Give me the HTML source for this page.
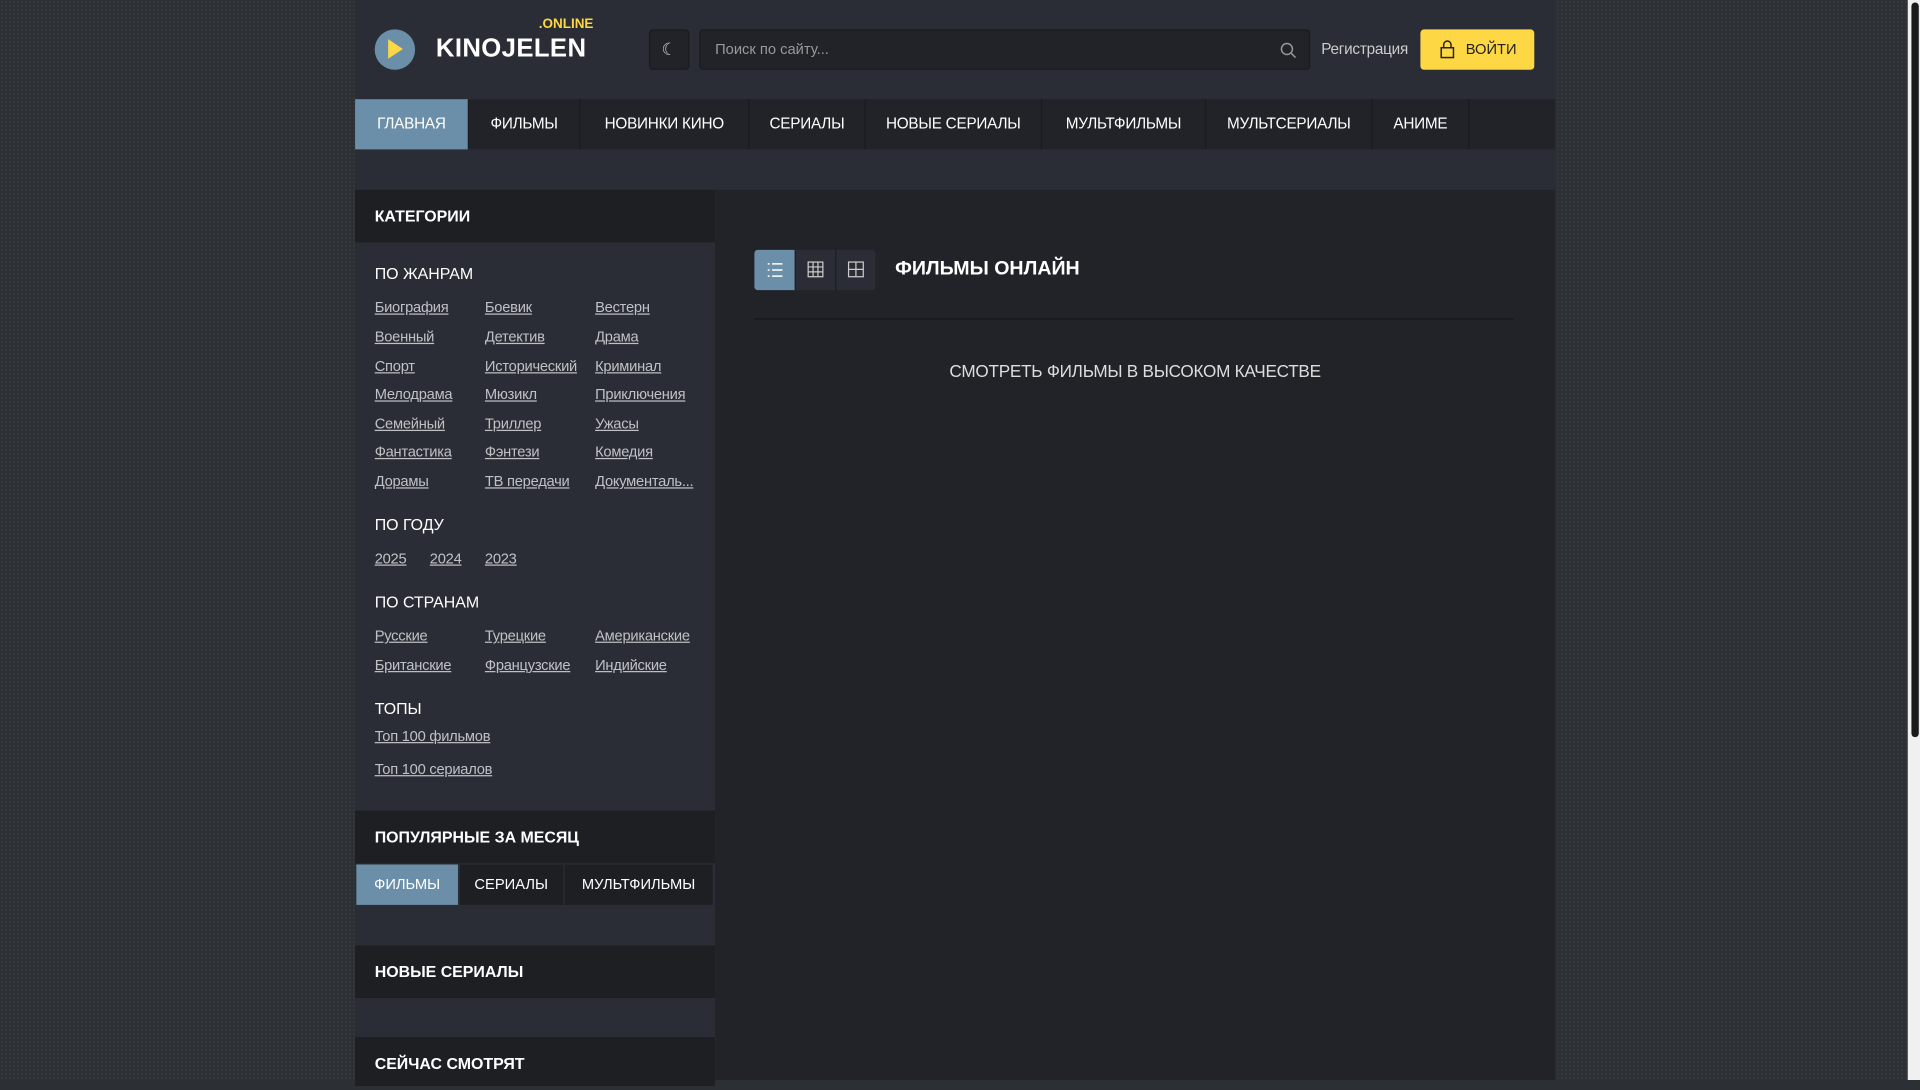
<!DOCTYPE html>
<html><head><meta charset="utf-8">
<style>
*{margin:0;padding:0;box-sizing:border-box}
html,body{width:1920px;height:1080px;overflow:hidden;background:#2c3035;font-family:"Liberation Sans",sans-serif}
body{background-color:#2c3035;background-image:radial-gradient(#353a3f 1px,transparent 1px);background-size:4px 4px}
#w{position:absolute;left:0;top:0;width:1568px;height:882px;transform:scale(1.22449);transform-origin:0 0}
.a{position:absolute}
.hdr{left:290px;top:0;width:980px;height:155px;background:#2a2d35}
.nav{left:290px;top:81px;width:980px;height:41px;background:#212328;display:flex}
.nav div{height:41px;line-height:41px;color:#fff;font-size:12.5px;border-right:1px solid #1a1b1f;text-align:center;white-space:nowrap;letter-spacing:-0.2px}
.nav .on{background:#6b8fa8}
.side{left:290px;top:155px;width:294px;height:727px;background:#2a2d35}
.main{left:584px;top:155px;width:686px;height:727px;background:#212328}
.sh{position:absolute;left:0;width:294px;height:43px;background:#1e1f23;color:#fff;font-weight:bold;font-size:13px;line-height:43px;padding-left:16px}
.lbl{position:absolute;left:16px;color:#fff;font-size:13px}
.lk{position:absolute;color:#bfc1c5;font-size:12px;text-decoration:underline;letter-spacing:-0.2px}
.tabs{position:absolute;left:1px;top:551px;width:292px;height:33px;display:flex;background:#1e1f23}
.tabs div{height:33px;line-height:33px;color:#fff;font-size:12px;text-align:center;border-right:1px solid #2a2d35}
</style></head><body>
<div id="w">
<div class="a hdr"></div>
<div class="a" style="left:306px;top:24px;width:33px;height:33px;border-radius:50%;background:#6b8fa8"></div>
<div class="a" style="left:317px;top:32px;width:0;height:0;border-left:12px solid #fdd744;border-top:8px solid transparent;border-bottom:8px solid transparent"></div>
<div class="a" style="left:440px;top:14px;color:#fdd744;font-weight:bold;font-size:11px">.ONLINE</div>
<div class="a" style="left:356px;top:28px;color:#fff;font-weight:bold;font-size:21px;letter-spacing:0.3px">KINOJELEN</div>
<div class="a" style="left:530px;top:24px;width:33px;height:33px;background:#212328;border:1px solid #1a1b1f;border-radius:3px;color:#ccc;font-size:14px;text-align:center;line-height:31px">☾</div>
<div class="a" style="left:571px;top:24px;width:499px;height:33px;background:#212328;border:1px solid #1a1b1f;border-radius:3px;color:#999;font-size:12px;line-height:31px;padding-left:12px">Поиск по сайту...</div>
<svg class="a" style="left:1045px;top:34px" width="14" height="14" viewBox="0 0 14 14"><circle cx="6" cy="6" r="4.5" fill="none" stroke="#999" stroke-width="1.2"/><path d="M9.5 9.5L13 13" stroke="#999" stroke-width="1.2"/></svg>
<div class="a" style="left:1079px;top:33px;color:#ccc;font-size:12.5px;letter-spacing:-0.2px">Регистрация</div>
<div class="a" style="left:1160px;top:24px;width:93px;height:33px;background:#fdd744;border-radius:3px;color:#222;font-size:12px;line-height:33px;padding-left:37px">ВОЙТИ</div>
<svg class="a" style="left:1175px;top:32px" width="14" height="16" viewBox="0 0 14 16"><rect x="2" y="7" width="10" height="8" fill="none" stroke="#222" stroke-width="1.2"/><path d="M4 7V4.5a3 3 0 016 0V7" fill="none" stroke="#222" stroke-width="1.2"/></svg>
<div class="a nav"><div class="on" style="width:93px">ГЛАВНАЯ</div><div style="width:91px">ФИЛЬМЫ</div><div style="width:138px">НОВИНКИ КИНО</div><div style="width:95px">СЕРИАЛЫ</div><div style="width:144px">НОВЫЕ СЕРИАЛЫ</div><div style="width:134px">МУЛЬТФИЛЬМЫ</div><div style="width:136px">МУЛЬТСЕРИАЛЫ</div><div style="width:79px">АНИМЕ</div></div>
<div class="a side">
<div class="sh" style="top:0">КАТЕГОРИИ</div>
<div class="lbl" style="top:61px">ПО ЖАНРАМ</div>
<div class="lk" style="left:16px;top:89px">Биография</div><div class="lk" style="left:106px;top:89px">Боевик</div><div class="lk" style="left:196px;top:89px">Вестерн</div>
<div class="lk" style="left:16px;top:113px">Военный</div><div class="lk" style="left:106px;top:113px">Детектив</div><div class="lk" style="left:196px;top:113px">Драма</div>
<div class="lk" style="left:16px;top:137px">Спорт</div><div class="lk" style="left:106px;top:137px">Исторический</div><div class="lk" style="left:196px;top:137px">Криминал</div>
<div class="lk" style="left:16px;top:160px">Мелодрама</div><div class="lk" style="left:106px;top:160px">Мюзикл</div><div class="lk" style="left:196px;top:160px">Приключения</div>
<div class="lk" style="left:16px;top:184px">Семейный</div><div class="lk" style="left:106px;top:184px">Триллер</div><div class="lk" style="left:196px;top:184px">Ужасы</div>
<div class="lk" style="left:16px;top:207px">Фантастика</div><div class="lk" style="left:106px;top:207px">Фэнтези</div><div class="lk" style="left:196px;top:207px">Комедия</div>
<div class="lk" style="left:16px;top:231px">Дорамы</div><div class="lk" style="left:106px;top:231px">ТВ передачи</div><div class="lk" style="left:196px;top:231px">Документаль...</div>
<div class="lbl" style="top:266px">ПО ГОДУ</div>
<div class="lk" style="left:16px;top:294px">2025</div><div class="lk" style="left:61px;top:294px">2024</div><div class="lk" style="left:106px;top:294px">2023</div>
<div class="lbl" style="top:329px">ПО СТРАНАМ</div>
<div class="lk" style="left:16px;top:357px">Русские</div><div class="lk" style="left:106px;top:357px">Турецкие</div><div class="lk" style="left:196px;top:357px">Американские</div>
<div class="lk" style="left:16px;top:381px">Британские</div><div class="lk" style="left:106px;top:381px">Французские</div><div class="lk" style="left:196px;top:381px">Индийские</div>
<div class="lbl" style="top:416px">ТОПЫ</div>
<div class="lk" style="left:16px;top:439px">Топ 100 фильмов</div>
<div class="lk" style="left:16px;top:466px">Топ 100 сериалов</div>
<div class="sh" style="top:507px">ПОПУЛЯРНЫЕ ЗА МЕСЯЦ</div>
<div class="tabs"><div style="width:84px;background:#6b8fa8">ФИЛЬМЫ</div><div style="width:86px">СЕРИАЛЫ</div><div style="width:122px">МУЛЬТФИЛЬМЫ</div></div>
<div class="sh" style="top:617px">НОВЫЕ СЕРИАЛЫ</div>
<div class="sh" style="top:692px;height:40px">СЕЙЧАС СМОТРЯТ</div>
</div>
<div class="a main">
<div class="a" style="left:32px;top:49px;width:99px;height:33px;background:#2a2d35;border-radius:3px;overflow:hidden">
<div class="a" style="left:0;top:0;width:33px;height:33px;background:#6b8fa8"></div>
<div class="a" style="left:33px;top:0;width:1px;height:33px;background:#1e1f23"></div>
<div class="a" style="left:66px;top:0;width:1px;height:33px;background:#1e1f23"></div>
</div>
<svg class="a" style="left:42px;top:59px" width="14" height="13" viewBox="0 0 14 13"><g stroke="#fff" stroke-width="1.2"><path d="M1 1.5h1.5M4.5 1.5H13M1 6.5h1.5M4.5 6.5H13M1 11.5h1.5M4.5 11.5H13"/></g></svg>
<svg class="a" style="left:75px;top:58px" width="14" height="14" viewBox="0 0 14 14"><g fill="none" stroke="#ccc" stroke-width="1"><rect x="1" y="1" width="12" height="12"/><path d="M5 1v12M9 1v12M1 5h12M1 9h12"/></g></svg>
<svg class="a" style="left:108px;top:58px" width="14" height="14" viewBox="0 0 14 14"><g fill="none" stroke="#ccc" stroke-width="1"><rect x="1" y="1" width="12" height="12"/><path d="M7 1v12M1 7h12"/></g></svg>
<div class="a" style="left:147px;top:56px;color:#fff;font-weight:bold;font-size:16px">ФИЛЬМЫ ОНЛАЙН</div>
<div class="a" style="left:32px;top:105px;width:620px;height:1px;background:#15161a"></div>
<div class="a" style="left:0;top:140px;width:686px;text-align:center;color:#ddd;font-size:14px;letter-spacing:-0.2px">СМОТРЕТЬ ФИЛЬМЫ В ВЫСОКОМ КАЧЕСТВЕ</div>
</div>
<div class="a" style="left:1558px;top:0;width:10px;height:882px;background:#f0f0f0"></div>
<div class="a" style="left:1561px;top:2px;width:6px;height:600px;background:#1a1a1a;border-radius:3px"></div>
</div>
</body></html>
